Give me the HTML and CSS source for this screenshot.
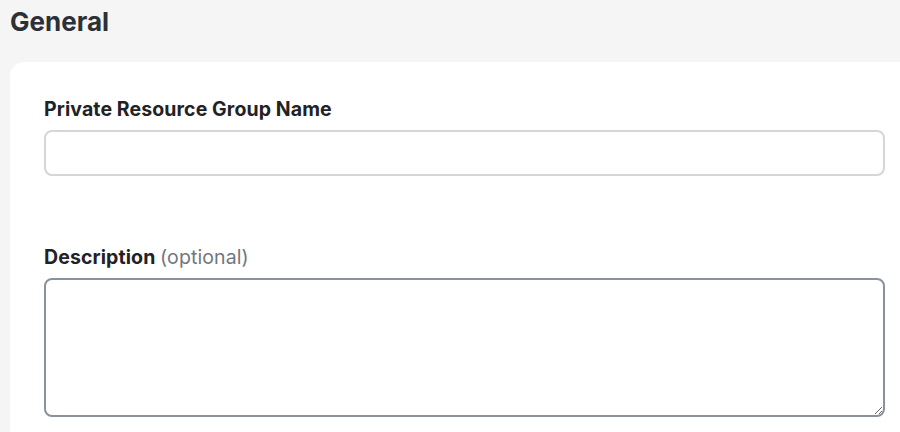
FILE: index.html
```html
<!DOCTYPE html>
<html>
<head>
<meta charset="utf-8">
<link rel="stylesheet" href="styles.css">
</head>
<body>
<div class="page">
  <h1 class="title">General</h1>
  <div class="card">
    <div class="field">
      <label class="label">Private Resource Group Name</label>
      <input class="input" type="text">
    </div>
    <div class="field field-desc">
      <label class="label">Description <span class="optional">(optional)</span></label>
      <textarea class="textarea"></textarea>
    </div>
  </div>
</div>
</body>
</html>
```
FILE: styles.css
```css
html, body {
  margin: 0;
  padding: 0;
  background: #f5f5f5;
  overflow: hidden;
  width: 900px;
  height: 432px;
}
.page {
  padding: 0 0 0 10px;
  font-family: Inter, "Noto Sans", sans-serif;
  color: #25282c;
}
.title {
  margin: 0;
  padding-top: 4px;
  height: 62px;
  box-sizing: border-box;
  font-size: 26px;
  font-weight: 700;
  letter-spacing: 0;
  color: #2d3035;
  line-height: 36px;
}
.card {
  background: #fff;
  border-radius: 14px 0 0 0;
  width: 900px;
  height: 370px;
  box-sizing: border-box;
  padding: 35px 25px 0 34px;
}
.field {
  display: flex;
  flex-direction: column;
}
.field-desc {
  margin-top: 69px;
}
.label {
  font-size: 19.5px;
  font-weight: 700;
  line-height: 24px;
  letter-spacing: 0.1px;
  margin-bottom: 9px;
  color: #1f2226;
}
.optional {
  font-weight: 400;
  color: #6f7780;
}
.input {
  height: 46px;
  box-sizing: border-box;
  border: 2px solid #d3d6da;
  border-radius: 8px;
  outline: none;
  background: #fff;
}
.textarea {
  height: 139px;
  box-sizing: border-box;
  border: 2px solid #89929b;
  border-radius: 8px;
  outline: none;
  resize: vertical;
  background: #fff;
}
```
